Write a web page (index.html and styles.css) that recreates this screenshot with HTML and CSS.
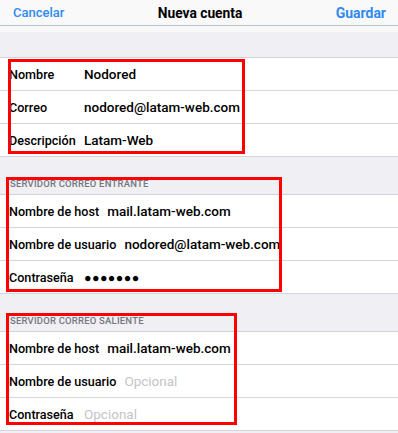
FILE: index.html
```html
<!DOCTYPE html>
<html lang="es">
<head>
  <meta charset="UTF-8" />
  <meta name="viewport" content="width=device-width, initial-scale=1.0"/>
  <title>Nueva cuenta</title>
  <link rel="stylesheet" href="styles.css">
</head>
<body>
  <header class="navbar">
    <a class="nav-btn">Cancelar</a>
    <h1>Nueva cuenta</h1>
    <a class="nav-btn strong">Guardar</a>
  </header>
  <div class="nav-shadow"></div>

  <div class="screen">
    <div class="spacer first"></div>
    <section class="group">
      <div class="row"><span class="label">Nombre</span><span class="value">Nodored</span></div>
      <div class="row"><span class="label">Correo</span><span class="value">nodored@latam-web.com</span></div>
      <div class="row"><span class="label">Descripción</span><span class="value">Latam-Web</span></div>
      <div class="mark mark-1"></div>
    </section>

    <div class="spacer"><p class="section-title">SERVIDOR CORREO ENTRANTE</p></div>
    <section class="group">
      <div class="row"><span class="label">Nombre de host</span><span class="value">mail.latam-web.com</span></div>
      <div class="row"><span class="label">Nombre de usuario</span><span class="value">nodored@latam-web.com</span></div>
      <div class="row"><span class="label">Contraseña</span><span class="value dots">●●●●●●●</span></div>
      <div class="mark mark-2"></div>
    </section>

    <div class="spacer"><p class="section-title">SERVIDOR CORREO SALIENTE</p></div>
    <section class="group">
      <div class="row"><span class="label">Nombre de host</span><span class="value">mail.latam-web.com</span></div>
      <div class="row"><span class="label">Nombre de usuario</span><span class="value muted">Opcional</span></div>
      <div class="row"><span class="label">Contraseña</span><span class="value muted">Opcional</span></div>
      <div class="mark mark-3"></div>
    </section>
  </div>
</body>
</html>
```

FILE: styles.css
```css
body { margin: 0; font-family: Roboto, 'Liberation Sans', sans-serif; background: #efeff4; color: #000; }
.navbar {
  height: 25px; display: flex; align-items: center; justify-content: space-between;
  padding: 0 12px 0 13px; background: #f9f9fa; border-bottom: 1px solid #b9c3cf;
}
.navbar h1 { margin: 0; font-size: 13.8px; font-weight: 700; }
.nav-btn { color: #2f8af0; font-size: 13px; font-weight: 500; }
.nav-btn.strong { font-size: 14px; font-weight: 700; }
.nav-shadow { height: 6px; background: #f8f8f9; }

.spacer { height: 37px; display: flex; align-items: flex-end; border-bottom: 1px solid #d2d2d6; }
.spacer.first { height: 25px; }
.section-title {
  margin: 0 0 5px 10px; font-size: 9.5px; font-weight: 500; color: #76767c; letter-spacing: 0.2px;
}

.group { position: relative; background: #fff; }
.row {
  height: 32px; display: flex; align-items: center; padding-left: 9px;
  border-bottom: 1px solid #d6d6da; font-size: 13.5px; font-weight: 500;
}
.label { min-width: 67px; margin-right: 8px; font-size: 12.6px; }
.value { white-space: nowrap; }
.value.muted { color: #c4c4c9; font-weight: 400; }
.value.dots { font-size: 12.5px; letter-spacing: 0.4px; }

.mark { position: absolute; border: 3px solid #f00; box-sizing: border-box; }
.mark-1 { left: 8px; top: 1px; width: 237px; height: 95px; }
.mark-2 { left: 6px; top: -18px; width: 276px; height: 115px; }
.mark-3 { left: 6px; top: -19px; width: 231px; height: 112px; }
```
